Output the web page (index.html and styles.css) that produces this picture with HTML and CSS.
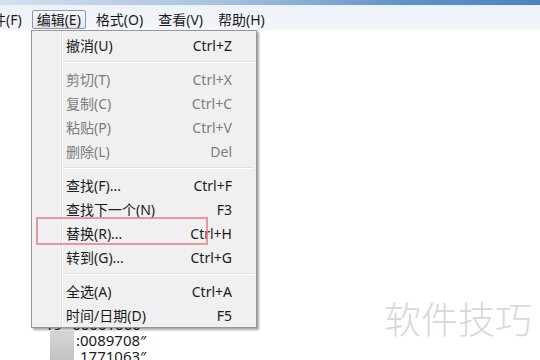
FILE: index.html
```html
<!DOCTYPE html>
<html lang="zh-CN">
<head>
<meta charset="utf-8">
<title>记事本 - 编辑菜单</title>
<link rel="stylesheet" href="styles.css">
</head>
<body>
<div class="window">
  <div class="titlebar"></div>
  <div class="menubar">
    <div class="mb-item first">文件(F)</div>
    <div class="mb-item active">编辑(E)</div>
    <div class="mb-item">格式(O)</div>
    <div class="mb-item">查看(V)</div>
    <div class="mb-item">帮助(H)</div>
  </div>
  <div class="doc">
    <div class="line l1"><span>19</span><span class="gap">00001000</span></div>
    <div class="line l2">:0089708″</div>
    <div class="line l3">1771063″</div>
  </div>

  <div class="cursor-block"></div>

  <div class="menu">
    <div class="item"><span>撤消(U)</span><span>Ctrl+Z</span></div>
    <div class="sep"></div>
    <div class="item disabled"><span>剪切(T)</span><span>Ctrl+X</span></div>
    <div class="item disabled"><span>复制(C)</span><span>Ctrl+C</span></div>
    <div class="item disabled"><span>粘贴(P)</span><span>Ctrl+V</span></div>
    <div class="item disabled"><span>删除(L)</span><span>Del</span></div>
    <div class="sep"></div>
    <div class="item"><span>查找(F)...</span><span>Ctrl+F</span></div>
    <div class="item"><span>查找下一个(N)</span><span>F3</span></div>
    <div class="item"><span>替换(R)...</span><span>Ctrl+H</span></div>
    <div class="item"><span>转到(G)...</span><span>Ctrl+G</span></div>
    <div class="sep"></div>
    <div class="item"><span>全选(A)</span><span>Ctrl+A</span></div>
    <div class="item"><span>时间/日期(D)</span><span>F5</span></div>
  </div>

  <div class="highlight-box"></div>
  <div class="watermark">软件技巧</div>
</div>
</body>
</html>
```
FILE: styles.css
```css
* { box-sizing: border-box; }
html, body {
  margin: 0;
  padding: 0;
  background: #ffffff;
}
.window {
  position: relative;
  width: 540px;
  height: 360px;
  overflow: hidden;
  font-family: "Noto Sans", "Noto Sans CJK SC", sans-serif;
  font-size: 14px;
  color: #1b1b1b;
}
.titlebar {
  height: 5px;
  background: linear-gradient(to right, #d3e0ee 0%, #a9c3df 40%, #5f93c8 75%, #4a84c0 100%);
}
.menubar {
  height: 25px;
  display: flex;
  align-items: flex-end;
  gap: 5px;
  padding-bottom: 1px;
  margin-left: -27px;
  background: linear-gradient(#edf2f9, #f3f6fb);
}
.mb-item {
  height: 19px;
  line-height: 17px;
  padding: 0 4px;
  border: 1px solid transparent;
  border-radius: 2px;
  white-space: nowrap;
}
.mb-item.active {
  border-color: #8e98a6;
  background: linear-gradient(#f7f8fa, #e3e7ed);
}
.doc {
  padding-top: 286px;
  font-size: 15px;
  line-height: 16px;
  color: #202020;
}
.line { white-space: nowrap; height: 16px; }
.l1 { padding-left: 45px; }
.l1 .gap { margin-left: 10px; }
.l2 { padding-left: 76px; }
.l3 { padding-left: 80px; }

.cursor-block {
  position: absolute;
  left: 50px;
  top: 331px;
  width: 24px;
  height: 29px;
  background: linear-gradient(#d6d6d6, #c2c2c2);
}

.menu {
  position: absolute;
  left: 31px;
  top: 30px;
  width: 226px;
  padding: 2px 0 0;
  border: 1px solid #979797;
  background: linear-gradient(to right, #f0f0f0 29px, #e2e3e3 29px, #e2e3e3 30px, #ffffff 30px, #ffffff 31px, #f0f0f0 31px);
  box-shadow: 2px 2px 2px rgba(0, 0, 0, 0.35);
}
.item {
  height: 24px;
  display: flex;
  align-items: center;
  justify-content: space-between;
  padding: 0 24px 0 34px;
  white-space: nowrap;
}
.item.disabled { color: #7d7d7d; }
.sep {
  height: 10px;
  margin: 0 2px 0 32px;
  background: linear-gradient(#f0f0f0 4px, #e0e0e0 4px, #e0e0e0 5px, #ffffff 5px, #ffffff 6px, #f0f0f0 6px);
}

.highlight-box {
  position: absolute;
  left: 36px;
  top: 217px;
  width: 172px;
  height: 28px;
  border: 2px solid rgba(232, 120, 130, 0.75);
}
.watermark {
  position: absolute;
  left: 384px;
  top: 294px;
  font-family: "Noto Sans CJK SC", sans-serif;
  font-size: 37px;
  line-height: 48px;
  font-weight: 300;
  color: #d8d8d8;
  white-space: nowrap;
}
```
